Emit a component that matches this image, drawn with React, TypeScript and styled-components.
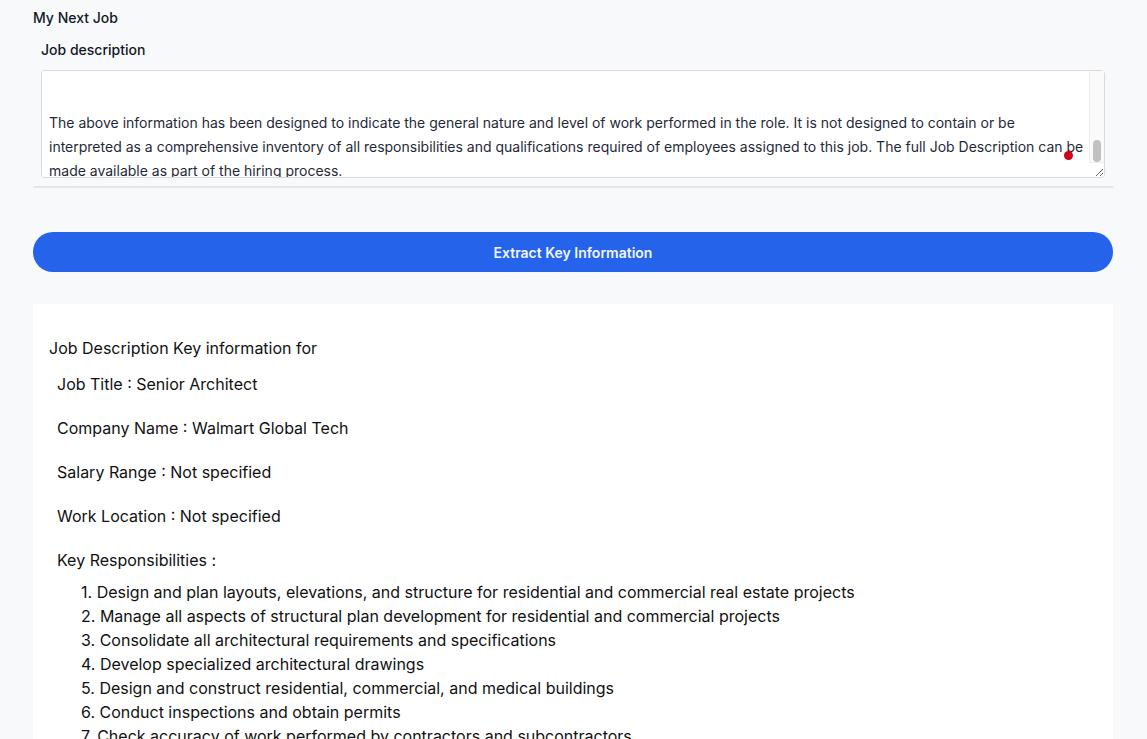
import { useEffect, useRef } from 'react';
import styled, { createGlobalStyle } from 'styled-components';

const GlobalStyle = createGlobalStyle`
  html, body {
    margin: 0;
    padding: 0;
    background: #f8f9fb;
    font-family: Inter, "Noto Sans", "Liberation Sans", sans-serif;
    color: #111827;
  }
`;

const Page = styled.div`
  box-sizing: border-box;
  min-height: 100vh;
  padding: 9px 34px 40px 33px;
`;

const AppTitle = styled.div`
  font-size: 14px;
  font-weight: 500;
  line-height: 18px;
  color: #111827;
`;

const InputGroup = styled.div`
  position: relative;
  padding: 0 8px 8px;
  border-bottom: 2px solid #e4e6ea;
  margin-top: 14px;
`;

const FieldLabel = styled.label`
  display: block;
  font-size: 14px;
  font-weight: 500;
  line-height: 18px;
  color: #111827;
  margin-bottom: 11px;
`;

const TextArea = styled.textarea`
  display: block;
  box-sizing: border-box;
  width: 100%;
  height: 108px;
  padding: 4px 17px 4px 7px;
  border: 1px solid #d7d9de;
  border-radius: 4px;
  background: #fff;
  font-family: inherit;
  font-size: 14px;
  line-height: 24px;
  color: #1f2937;
  resize: vertical;
  outline: none;
`;

/* drawn scrollbar, the headless browser hides the native one */
const ScrollTrack = styled.div`
  position: absolute;
  right: 9px;
  top: 30px;
  width: 14px;
  height: 91px;
  background: #fafafa;
  border-left: 1px solid #ededed;
  border-bottom: 1px solid #ededed;
  pointer-events: none;
`;

const ScrollThumb = styled.div`
  position: absolute;
  left: 3px;
  top: 69px;
  width: 8px;
  height: 22px;
  border-radius: 4px;
  background: #c1c1c1;
`;

const CursorDot = styled.span`
  position: absolute;
  left: 1031px;
  top: 110px;
  width: 9px;
  height: 9px;
  border-radius: 50%;
  background: #d0021b;
  pointer-events: none;
`;

const ExtractButton = styled.button`
  display: block;
  width: 100%;
  height: 40px;
  margin-top: 44px;
  border: none;
  border-radius: 20px;
  background: #2563eb;
  color: #f1f5ff;
  font-family: inherit;
  font-size: 14px;
  font-weight: 600;
  cursor: pointer;
`;

const ResultCard = styled.section`
  margin-top: 32px;
  background: #fff;
  padding: 32px 16px 24px;
  font-size: 16px;
  line-height: 24px;
  color: #111111;
`;

const ResultHeading = styled.div`
  margin-bottom: 12px;
`;

const Field = styled.div<{ $gap: number }>`
  padding-left: 8px;
  margin-bottom: ${(p) => p.$gap}px;
`;

const List = styled.ol`
  list-style: none;
  margin: 0;
  padding: 0 0 0 32px;
`;

const Item = styled.li`
  line-height: 24px;
`;

const description = `Job Title: Senior Architect
Company: Walmart Global Tech

What you'll do...
Design and plan layouts, elevations, and structure for residential and commercial real estate projects.
Manage all aspects of structural plan development for residential and commercial projects.
Consolidate all architectural requirements and specifications.
Develop specialized architectural drawings.
Design and construct residential, commercial, and medical buildings.
Conduct inspections and obtain permits.
Check accuracy of work performed by contractors and subcontractors.


The above information has been designed to indicate the general nature and level of work performed in the role. It is not designed to contain or be interpreted as a comprehensive inventory of all responsibilities and qualifications required of employees assigned to this job. The full Job Description can be made available as part of the hiring process.`;

const fields = [
  'Job Title : Senior Architect',
  'Company Name : Walmart Global Tech',
  'Salary Range : Not specified',
  'Work Location : Not specified',
];

const responsibilities = [
  'Design and plan layouts, elevations, and structure for residential and commercial real estate projects',
  'Manage all aspects of structural plan development for residential and commercial projects',
  'Consolidate all architectural requirements and specifications',
  'Develop specialized architectural drawings',
  'Design and construct residential, commercial, and medical buildings',
  'Conduct inspections and obtain permits',
  'Check accuracy of work performed by contractors and subcontractors',
  'Review and approve construction documents',
];

const App = () => {
  const areaRef = useRef<HTMLTextAreaElement>(null);

  useEffect(() => {
    // keep the last paragraph in view, like the user scrolled down
    if (areaRef.current) {
      const el = areaRef.current;
      el.scrollTop = el.scrollHeight - el.clientHeight - 10;
    }
  }, []);

  return (
    <>
      <GlobalStyle />
      <Page>
        <AppTitle>My Next Job</AppTitle>
        <InputGroup>
          <FieldLabel htmlFor="jd">Job description</FieldLabel>
          <TextArea id="jd" ref={areaRef} defaultValue={description} spellCheck={false} />
          <ScrollTrack>
            <ScrollThumb />
          </ScrollTrack>
          <CursorDot />
        </InputGroup>
        <ExtractButton>Extract Key Information</ExtractButton>
        <ResultCard>
          <ResultHeading>Job Description Key information for</ResultHeading>
          {fields.map((f) => (
            <Field key={f} $gap={20}>
              {f}
            </Field>
          ))}
          <Field $gap={8}>Key Responsibilities :</Field>
          <List>
            {responsibilities.map((r, i) => (
              <Item key={r}>
                {i + 1}. {r}
              </Item>
            ))}
          </List>
        </ResultCard>
      </Page>
    </>
  );
};

export default App;
